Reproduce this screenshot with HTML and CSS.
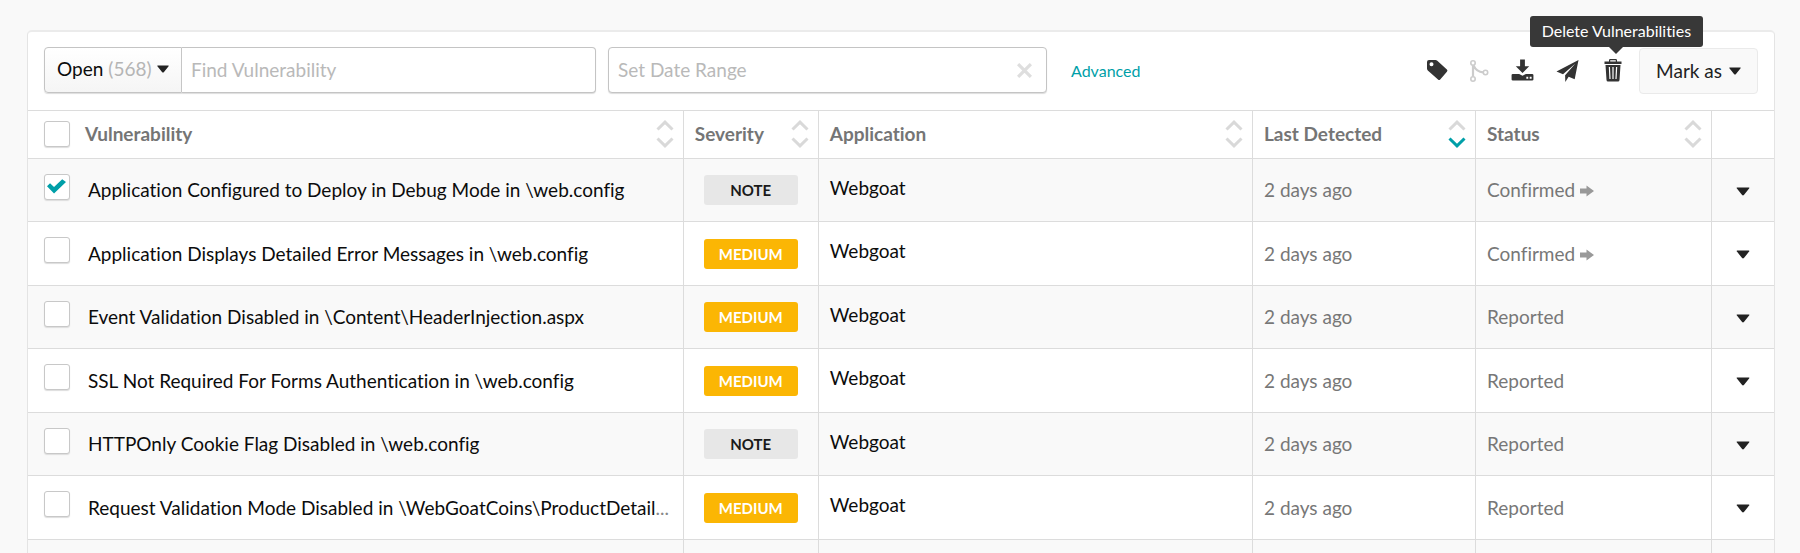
FILE: index.html
```html
<!DOCTYPE html>
<html lang="en">
<head>
<meta charset="utf-8">
<title>Vulnerabilities</title>
<link rel="stylesheet" href="styles.css">
</head>
<body>
<svg class="defs" aria-hidden="true">
  <symbol id="caret" viewBox="0 0 12 8"><path d="M.8.5h10.400q.9 0 .4.700L6.800 7.200q-.8.800-1.600 0L.4 1.200q-.5-.7.4-.7z"/></symbol>
  <symbol id="sort-up" viewBox="0 0 18 11"><path d="M1.500 9.500 9 2.200l7.500 7.300"/></symbol>
  <symbol id="sort-down" viewBox="0 0 18 11"><path d="M1.500 1.500 9 8.800l7.500-7.300"/></symbol>
  <symbol id="arrow" viewBox="0 0 14 12"><path d="M0 3.500h6.500V.5L14 6l-7.500 5.500v-3H0z"/></symbol>
</svg>
<main class="panel">
  <form class="toolbar">
    <div class="search">
      <button type="button" class="filter">Open <span class="count">(568)</span><svg class="caret"><use href="#caret"/></svg></button>
      <input class="field find" type="text" placeholder="Find Vulnerability" aria-label="Find Vulnerability">
    </div>
    <div class="range">
      <input class="field" type="text" placeholder="Set Date Range" aria-label="Set Date Range">
      <button type="button" class="clear" aria-label="Clear date range"><svg viewBox="0 0 14 14"><path d="M1 1l12 12M13 1 1 13"/></svg></button>
    </div>
    <a class="advanced" href="#">Advanced</a>
    <div class="actions">
      <button type="button" class="icon" aria-label="Tag"><svg class="w-tag" viewBox="2 1 21 24"><path fill-rule="evenodd" d="M4 2h6.500q1 0 1.800.7l9.600 8.800q1.100 1.100 0 2.200l-6.700 7.700q-1.100 1.100-2.200 0L2.800 12.500Q2 11.700 2 10.500V4q0-2 2-2zM6.500 4.300a2 2 0 1 0 0 4 2 2 0 0 0 0-4z"/></svg></button>
      <button type="button" class="icon muted" aria-label="Merge" disabled><svg class="w-merge" viewBox="2 0 19 24"><g fill="none" stroke="currentColor" stroke-width="1.600"><circle cx="5" cy="4" r="2.200"/><circle cx="5" cy="20" r="2.200"/><circle cx="17.500" cy="13.500" r="2.200"/><path stroke-width="2.200" d="M5 6.500v11M5.500 6.500q3 6.500 9.700 6.800"/></g></svg></button>
      <button type="button" class="icon" aria-label="Export"><svg class="w-wide" viewBox="0 0 24 24"><path fill-rule="evenodd" d="M9.500 0h5v7h4.500L12 14 5 7h4.500zM2 15h6.500l3.500 2 3.500-2H22q1.400 0 1.400 1.200v4.600Q23.400 22 22 22H2Q.6 22 .6 20.800v-4.600Q.6 15 2 15zM16 18v2h2v-2zM19.500 18v2h2v-2z"/></svg></button>
      <button type="button" class="icon" aria-label="Send"><svg class="w-wide" viewBox="0 0 24 24"><path d="M23.500.5 19.500 20.500l-6.300-2.600-3.500 5.600-.2-7L20 4.500 7.300 15.300.5 12.500z"/></svg></button>
      <div class="tip-host">
        <button type="button" class="icon" aria-label="Delete" aria-describedby="tip"><svg viewBox="0 0 24 24"><path fill-rule="evenodd" d="M8 2.500V1.200Q8 0 9.200 0h5.600Q16 0 16 1.200v1.300h4.500V5h-17V2.500zM9.200 2.500h5.600V1.200H9.200zM4.500 6h15l-1 15q-.1 1.500-1.500 1.500H7Q5.600 22.500 5.500 21zM7.800 8l.6 12h1.200L9 8zM11.400 8v12h1.200V8zM15 8l-.6 12h1.200l.6-12z"/></svg></button>
        <div class="tip" id="tip" role="tooltip">Delete Vulnerabilities</div>
      </div>
      <button type="button" class="mark">Mark as<svg class="caret"><use href="#caret"/></svg></button>
    </div>
  </form>
  <table class="grid">
    <colgroup><col class="c-vuln"><col class="c-sev"><col><col class="c-date"><col class="c-status"><col class="c-menu"></colgroup>
    <thead>
      <tr>
        <th scope="col"><div class="head"><input type="checkbox" class="check" aria-label="Select all"><span class="grow">Vulnerability</span><span class="sort"><svg><use href="#sort-up"/></svg><svg><use href="#sort-down"/></svg></span></div></th>
        <th scope="col"><div class="head"><span class="grow">Severity</span><span class="sort"><svg><use href="#sort-up"/></svg><svg><use href="#sort-down"/></svg></span></div></th>
        <th scope="col"><div class="head"><span class="grow">Application</span><span class="sort"><svg><use href="#sort-up"/></svg><svg><use href="#sort-down"/></svg></span></div></th>
        <th scope="col"><div class="head"><span class="grow">Last Detected</span><span class="sort"><svg><use href="#sort-up"/></svg><svg class="on"><use href="#sort-down"/></svg></span></div></th>
        <th scope="col"><div class="head"><span class="grow">Status</span><span class="sort"><svg><use href="#sort-up"/></svg><svg><use href="#sort-down"/></svg></span></div></th>
        <td></td>
      </tr>
    </thead>
    <tbody>
      <tr>
        <td><div class="name"><input type="checkbox" class="check" id="v1" checked><label for="v1">Application Configured to Deploy in Debug Mode in \web.config</label></div></td>
        <td><span class="badge">NOTE</span></td><td class="app">Webgoat</td><td class="dim">2 days ago</td>
        <td class="dim">Confirmed <svg class="arrow"><use href="#arrow"/></svg></td>
        <td class="menu"><button type="button" aria-label="Row actions"><svg class="caret"><use href="#caret"/></svg></button></td>
      </tr>
      <tr>
        <td><div class="name"><input type="checkbox" class="check" id="v2"><label for="v2">Application Displays Detailed Error Messages in \web.config</label></div></td>
        <td><span class="badge medium">MEDIUM</span></td><td class="app">Webgoat</td><td class="dim">2 days ago</td>
        <td class="dim">Confirmed <svg class="arrow"><use href="#arrow"/></svg></td>
        <td class="menu"><button type="button" aria-label="Row actions"><svg class="caret"><use href="#caret"/></svg></button></td>
      </tr>
      <tr>
        <td><div class="name"><input type="checkbox" class="check" id="v3"><label for="v3">Event Validation Disabled in \Content\HeaderInjection.aspx</label></div></td>
        <td><span class="badge medium">MEDIUM</span></td><td class="app">Webgoat</td><td class="dim">2 days ago</td>
        <td class="dim">Reported</td>
        <td class="menu"><button type="button" aria-label="Row actions"><svg class="caret"><use href="#caret"/></svg></button></td>
      </tr>
      <tr>
        <td><div class="name"><input type="checkbox" class="check" id="v4"><label for="v4">SSL Not Required For Forms Authentication in \web.config</label></div></td>
        <td><span class="badge medium">MEDIUM</span></td><td class="app">Webgoat</td><td class="dim">2 days ago</td>
        <td class="dim">Reported</td>
        <td class="menu"><button type="button" aria-label="Row actions"><svg class="caret"><use href="#caret"/></svg></button></td>
      </tr>
      <tr>
        <td><div class="name"><input type="checkbox" class="check" id="v5"><label for="v5">HTTPOnly Cookie Flag Disabled in \web.config</label></div></td>
        <td><span class="badge">NOTE</span></td><td class="app">Webgoat</td><td class="dim">2 days ago</td>
        <td class="dim">Reported</td>
        <td class="menu"><button type="button" aria-label="Row actions"><svg class="caret"><use href="#caret"/></svg></button></td>
      </tr>
      <tr>
        <td><div class="name"><input type="checkbox" class="check" id="v6"><label for="v6">Request Validation Mode Disabled in \WebGoatCoins\ProductDetail<span class="more">...</span></label></div></td>
        <td><span class="badge medium">MEDIUM</span></td><td class="app">Webgoat</td><td class="dim">2 days ago</td>
        <td class="dim">Reported</td>
        <td class="menu"><button type="button" aria-label="Row actions"><svg class="caret"><use href="#caret"/></svg></button></td>
      </tr>
      <tr><td></td><td></td><td></td><td></td><td></td><td></td></tr>
    </tbody>
  </table>
</main>
</body>
</html>
```

FILE: styles.css
```css
* { box-sizing: border-box; }

html { height: 100%; }

body {
  margin: 0;
  height: 100%;
  padding: 30px 25px 0 27px;
  overflow: hidden;
  background: #f9f9f9;
  color: #0c0c0c;
  font: 19px/24px Lato, "Liberation Sans", sans-serif;
  font-variant-ligatures: no-common-ligatures;
}

button, input { font: inherit; font-variant-ligatures: inherit; color: inherit; margin: 0; }
button { cursor: pointer; }
.defs { display: none; }

.panel {
  background: #fff;
  border: 1px solid #e4e4e4;
  border-top: 2px solid #ebebeb;
  border-radius: 5px 5px 0 0;
}

.toolbar {
  display: flex;
  align-items: center;
  gap: 12px;
  padding: 14px 16px 16px;
}

.search { display: flex; flex: 0 1 552px; }
.range { display: flex; flex: 0 1 439px; position: relative; }

.filter, .field {
  height: 46px;
  border: 1px solid #c4c4c4;
  border-radius: 4px;
  box-shadow: 0 1px 1px #ddd;
}

.filter {
  display: flex;
  align-items: center;
  gap: 5px;
  flex: none;
  width: 138px;
  padding: 0 12px 2px;
  background: linear-gradient(#fff, #f5f5f5);
  border-radius: 4px 0 0 4px;
}

.count { color: #b5b5b5; }

.field {
  flex: 1;
  min-width: 0;
  padding: 0 9px 2px;
  background: #fff;
}
.field::placeholder { color: #b9b9b9; opacity: 1; }
.find { border-left: 0; border-radius: 0 4px 4px 0; }

.clear {
  position: absolute;
  right: 15px;
  top: 16px;
  display: flex;
  padding: 0;
  border: 0;
  background: none;
}
.clear svg { width: 15px; height: 15px; fill: none; stroke: #dedede; stroke-width: 3; }

.advanced {
  margin: 2px 0 0 12px;
  color: #009fa8;
  font-size: 16px;
  text-decoration: none;
}

.actions { display: flex; align-items: center; gap: 22px; margin: 2px 0 0 auto; }

.icon {
  display: flex;
  padding: 0;
  border: 0;
  background: none;
  color: #333;
}
.icon svg { width: 24px; height: 24px; fill: currentColor; }
.icon .w-tag { width: 21px; }
.icon .w-merge { width: 19px; }
.icon .w-wide { width: 23px; }
.icon.muted { color: #ccc; }

.tip-host { position: relative; margin-right: -8px; }

.tip {
  position: absolute;
  right: -78px;
  bottom: 36px;
  padding: 3px 12px 4px;
  border-radius: 3px;
  background: #383838;
  color: #fff;
  font-size: 16px;
  white-space: nowrap;
}
.tip::after {
  content: "";
  position: absolute;
  left: 50%;
  top: 100%;
  margin-left: -7px;
  border: 7px solid transparent;
  border-top-color: #383838;
  border-bottom: 0;
}

.mark {
  display: flex;
  align-items: center;
  gap: 7px;
  height: 46px;
  padding: 0 16px;
  border: 1px solid #eaeaea;
  border-radius: 4px;
  background: #f9f9f9;
  color: #222;
}

.caret { width: 12px; height: 8px; fill: #222; }

.grid {
  width: 100%;
  border-collapse: separate;
  border-spacing: 0;
  table-layout: fixed;
}
.c-vuln { width: 37.5%; }
.c-sev { width: 135px; }
.c-date { width: 223px; }
.c-status { width: 236px; }
.c-menu { width: 63px; }

.grid th, .grid td {
  height: 63px;
  padding: 0 11px;
  border-top: 1px solid #dcdcdc;
  border-left: 1px solid #dcdcdc;
  text-align: left;
}
.grid th { padding: 0 9px 2px 11px; }
.grid th:first-child, .grid td:first-child { padding-left: 16px; border-left: 0; }
.grid thead th, .grid thead td { height: 48px; }
.grid tbody tr:nth-child(even) td { height: 64px; }
.grid tbody tr:nth-child(odd) { background: #f9f9f9; }

.head { display: flex; align-items: center; color: #757575; }
.grow { flex: 1; }
.head .check { margin-right: 15px; }

.sort { display: flex; flex-direction: column; gap: 6px; }
.sort svg { width: 18px; height: 11px; fill: none; stroke: #d9d9d9; stroke-width: 3; }
.sort .on { stroke: #009fa8; }

.name { display: flex; align-items: center; white-space: nowrap; }
.name .check { margin: 0 18px 7px 0; }
.more { color: #888; }

.check {
  appearance: none;
  flex: none;
  display: flex;
  width: 26px;
  height: 26px;
  border: 1px solid #c8c8c8;
  border-radius: 3px;
  background: #fff;
  box-shadow: 0 1px 1px #ddd;
}
.check:checked::before {
  content: "";
  flex: 1;
  margin: 4px 3px 5px 2px;
  background: #009fa8;
  clip-path: polygon(0 52%, 16% 32%, 37% 56%, 80% 5%, 100% 24%, 37% 100%);
}

.badge {
  display: block;
  width: 94px;
  margin-left: 9px;
  padding: 3px 0;
  border-radius: 3px;
  background: #e7e7e7;
  color: #1a1a1a;
  font-size: 15px;
  font-weight: 700;
  text-align: center;
}
.medium { background: #fbb604; color: #fff; }

.grid .app { padding-bottom: 5px; }
.dim { color: #777; }
.arrow { width: 14px; height: 12px; fill: #999; }

.grid .menu { padding: 0; text-align: center; }
.menu button { padding: 8px; border: 0; background: none; line-height: 0; }
.menu .caret { width: 14px; height: 9px; }
```
